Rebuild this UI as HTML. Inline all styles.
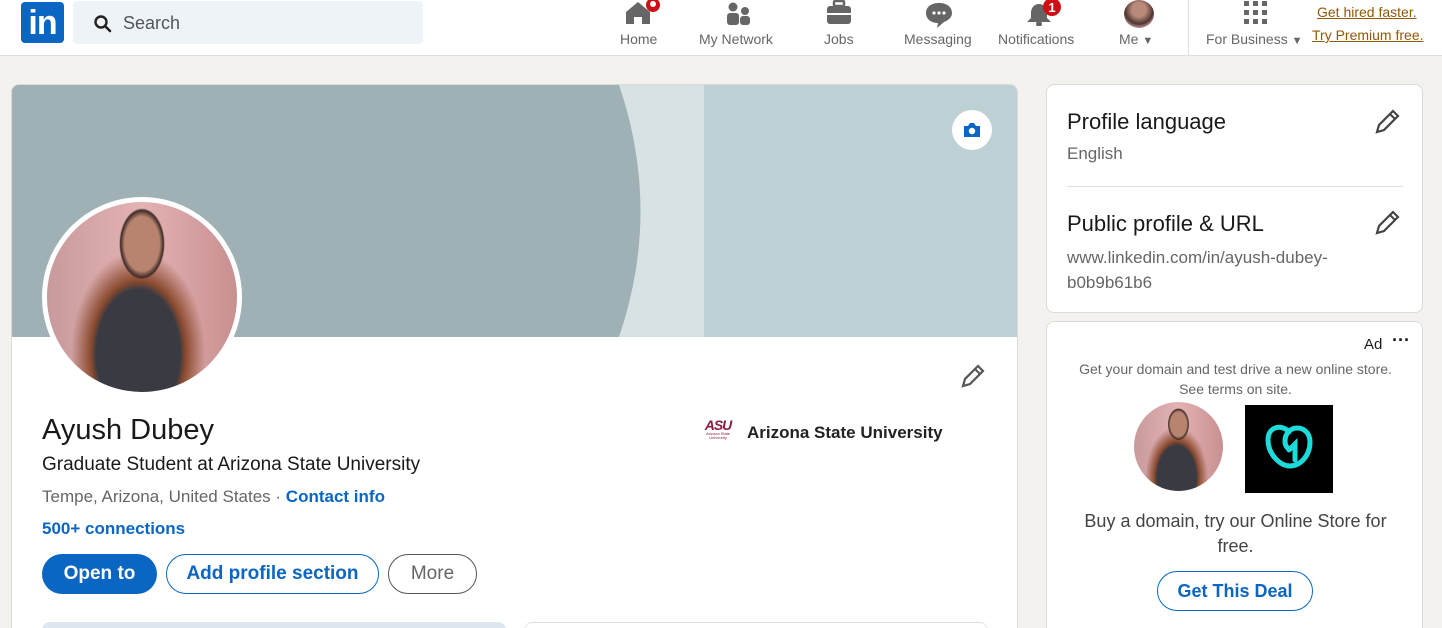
<!DOCTYPE html>
<html style="overflow:hidden"><head><meta charset="utf-8"><style>
*{box-sizing:border-box;margin:0;padding:0}
html,body{width:1442px;height:628px;overflow:hidden}
body{background:#f3f2ef;font-family:"Liberation Sans",sans-serif;position:relative;color:rgba(0,0,0,.9)}
.abs{position:absolute}
.hdr{position:absolute;left:0;top:0;width:1442px;height:56px;background:#fff;border-bottom:1px solid #e0dfdc}
.nav{position:absolute;top:31px;font-size:14px;color:#666;text-align:center}
.card{position:absolute;background:#fff;border-radius:8px;border:1px solid #dcdad6;overflow:hidden}
.btn{position:absolute;height:40px;border-radius:20px;font-size:19px;font-weight:bold;display:flex;align-items:center;justify-content:center}
</style></head><body>
<div class="hdr">
 <div class="abs" style="left:21px;top:2px;width:43px;height:41px;background:#0a66c2;border-radius:4px;color:#fff;font-weight:bold;font-size:34px;line-height:42px;text-align:center;letter-spacing:-1px">in</div>
 <div class="abs" style="left:73px;top:1px;width:350px;height:43px;background:#eef3f8;border-radius:4px"></div>
 <svg class="abs" style="left:93px;top:14px" width="20" height="20" viewBox="0 0 20 20"><circle cx="8" cy="8" r="5.5" fill="none" stroke="#222" stroke-width="2.4"/><path d="M12 12l5 5" stroke="#222" stroke-width="2.6" stroke-linecap="round"/></svg>
 <div class="abs" style="left:123px;top:13px;font-size:18px;color:#555">Search</div>
 <svg class="abs" style="left:624px;top:0" width="40" height="26"><path d="M2 12L14 2l12 10v12h-8v-7h-8v7H2z" fill="#666"/><circle cx="29" cy="5" r="7" fill="#cc1016"/><circle cx="29" cy="4" r="3" fill="#fff"/></svg>
 <div class="nav" style="left:620px">Home</div>
 <svg class="abs" style="left:726px;top:1px" width="26" height="24"><circle cx="7" cy="6" r="4.5" fill="#666"/><circle cx="19" cy="10" r="4" fill="#666"/><rect x="1" y="12" width="12" height="12" rx="3" fill="#666"/><rect x="14" y="15" width="10" height="9" rx="3" fill="#666"/></svg>
 <div class="nav" style="left:699px">My Network</div>
 <svg class="abs" style="left:826px;top:0" width="26" height="24"><rect x="8" y="1" width="10" height="5" rx="1" fill="none" stroke="#666" stroke-width="2.5"/><rect x="1" y="6" width="24" height="18" rx="3" fill="#666"/><rect x="1" y="13" width="24" height="2" fill="#fff"/></svg>
 <div class="nav" style="left:824px">Jobs</div>
 <svg class="abs" style="left:925px;top:2px" width="28" height="26"><path d="M14 1C6 1 1 5 1 11s5 10 12 10l-1 5 7-6c5-2 8-5 8-9C27 5 22 1 14 1z" fill="#666"/><circle cx="9" cy="11" r="1.6" fill="#fff"/><circle cx="14" cy="11" r="1.6" fill="#fff"/><circle cx="19" cy="11" r="1.6" fill="#fff"/></svg>
 <div class="nav" style="left:904px">Messaging</div>
 <svg class="abs" style="left:1024px;top:0" width="40" height="26"><path d="M15 4c-5 0-8 4-8 9v5l-4 4h24l-4-4v-5c0-5-3-9-8-9z" fill="#666"/><circle cx="15" cy="24" r="3" fill="#666"/><circle cx="28" cy="7" r="9" fill="#cc1016"/><text x="28" y="12" font-size="13" font-weight="bold" fill="#fff" text-anchor="middle" font-family="Liberation Sans">1</text></svg>
 <div class="nav" style="left:998px">Notifications</div>
 <div class="abs" style="left:1124px;top:0;width:30px;height:28px;border-radius:50%;background:radial-gradient(circle at 50% 35%,#b98a7a 0 30%,#4d3630 60%,#d2a5a5 80%)"></div>
 <div class="nav" style="left:1119px">Me <span style="font-size:11px">▼</span></div>
 <div class="abs" style="left:1188px;top:0;width:1px;height:56px;background:#e0dfdc"></div>
 <svg class="abs" style="left:1243px;top:0" width="26" height="26"><g fill="#666"><rect x="1" y="1" width="5" height="5"/><rect x="10" y="1" width="5" height="5"/><rect x="19" y="1" width="5" height="5"/><rect x="1" y="10" width="5" height="5"/><rect x="10" y="10" width="5" height="5"/><rect x="19" y="10" width="5" height="5"/><rect x="1" y="19" width="5" height="5"/><rect x="10" y="19" width="5" height="5"/><rect x="19" y="19" width="5" height="5"/></g></svg>
 <div class="nav" style="left:1206px">For Business <span style="font-size:11px">▼</span></div>
 <div class="abs" style="left:1317px;top:4px;font-size:14px;color:#915907;text-decoration:underline">Get hired faster.</div>
 <div class="abs" style="left:1312px;top:27px;font-size:14px;color:#915907;text-decoration:underline">Try Premium free.</div>
</div>

<div class="card" style="left:11px;top:84px;width:1007px;height:560px">
 <svg class="abs" style="left:0;top:0" width="1007" height="252"><rect width="1007" height="252" fill="#bdd1d5"/><rect width="692" height="252" fill="#d7e2e4"/><path d="M0 0H607Q650 126 607 252H0Z" fill="#9fb1b4"/></svg>
 <div class="abs" style="left:940px;top:25px;width:40px;height:40px;border-radius:50%;background:#fff"></div>
 <svg class="abs" style="left:950px;top:37px" width="20" height="16"><path d="M2 4h4l2-3h4l2 3h4v11H2z" fill="#0a66c2"/><circle cx="10" cy="9" r="3.2" fill="#fff"/></svg>
 <div class="abs" style="left:30px;top:112px;width:200px;height:200px;border-radius:50%;background:#fff;padding:5px"><div style="width:190px;height:190px;border-radius:50%;background:radial-gradient(ellipse at 50% 22%,#b88470 0 13%,#3e2b26 16%,transparent 17%),radial-gradient(ellipse at 48% 80%,#3a3a42 0 30%,#8a4a2e 34%,transparent 48%),linear-gradient(90deg,#c89a9c,#e4b2b4 50%,#c89090)"></div></div>
 <svg class="abs" style="left:948px;top:278px" width="26" height="26"><path d="M3 23l2-7L18 3l5 5L10 21z" fill="none" stroke="#555" stroke-width="2.2"/><path d="M15 6l5 5" stroke="#555" stroke-width="2"/></svg>
 <div class="abs" style="left:30px;top:329px;font-size:29px">Ayush Dubey</div>
 <div class="abs" style="left:30px;top:369px;font-size:19px">Graduate Student at Arizona State University</div>
 <div class="abs" style="left:30px;top:402px;font-size:17px;color:#666">Tempe, Arizona, United States · <b style="color:#0a66c2">Contact info</b></div>
 <div class="abs" style="left:30px;top:434px;font-size:17px;font-weight:bold;color:#0a66c2">500+ connections</div>
 <div class="abs" style="left:690px;top:333px;width:32px;text-align:center;line-height:1"><div style="font-size:14px;font-weight:bold;color:#8c1d40;font-style:italic;letter-spacing:-1px">ASU</div><div style="font-size:4px;color:#8c1d40">Arizona State University</div></div>
 <div class="abs" style="left:735px;top:338px;font-size:17px;font-weight:bold;color:#222">Arizona State University</div>
 <div class="btn" style="left:30px;top:469px;width:115px;background:#0a66c2;color:#fff">Open to</div>
 <div class="btn" style="left:154px;top:469px;width:213px;border:1px solid #0a66c2;color:#0a66c2">Add profile section</div>
 <div class="btn" style="left:376px;top:469px;width:89px;border:1px solid #555;color:#666;font-weight:normal">More</div>
 <div class="abs" style="left:30px;top:537px;width:464px;height:30px;background:#dde7f0;border-radius:8px"></div>
 <div class="abs" style="left:512px;top:537px;width:464px;height:30px;border:1px solid #e0e0e0;border-radius:8px"></div>
</div>

<div class="card" style="left:1046px;top:84px;width:377px;height:229px">
 <div class="abs" style="left:20px;top:24px;font-size:22px">Profile language</div>
 <div class="abs" style="left:20px;top:59px;font-size:17px;color:#666">English</div>
 <div class="abs" style="left:20px;top:101px;width:336px;height:1px;background:#e0dfdc"></div>
 <div class="abs" style="left:20px;top:126px;font-size:22px">Public profile &amp; URL</div>
 <div class="abs" style="left:20px;top:160px;font-size:17px;color:#666;line-height:25px">www.linkedin.com/in/ayush-dubey-<br>b0b9b61b6</div>
 <svg class="abs" style="left:327px;top:22px" width="28" height="28"><path d="M3 25l2-7L19 4l5 5L10 23z" fill="none" stroke="#444" stroke-width="2.2"/><path d="M16 7l5 5" stroke="#444" stroke-width="2"/></svg>
 <svg class="abs" style="left:327px;top:123px" width="28" height="28"><path d="M3 25l2-7L19 4l5 5L10 23z" fill="none" stroke="#444" stroke-width="2.2"/><path d="M16 7l5 5" stroke="#444" stroke-width="2"/></svg>
</div>

<div class="card" style="left:1046px;top:321px;width:377px;height:320px">
 <div class="abs" style="left:317px;top:14px;font-size:15px">Ad</div>
 <div class="abs" style="left:345px;top:8px;font-size:18px;font-weight:bold">···</div>
 <div class="abs" style="left:0;top:37px;width:377px;text-align:center;font-size:14px;color:#666;line-height:20px">Get your domain and test drive a new online store.<br>See terms on site.</div>
 <div class="abs" style="left:87px;top:80px;width:89px;height:89px;border-radius:50%;background:radial-gradient(ellipse at 50% 25%,#b88470 0 13%,#3e2b26 16%,transparent 17%),radial-gradient(ellipse at 48% 85%,#3a3a42 0 30%,#8a4a2e 34%,transparent 48%),linear-gradient(90deg,#c89a9c,#e4b2b4 50%,#c89090)"></div>
 <div class="abs" style="left:198px;top:83px;width:88px;height:88px;background:#000"></div>
 <svg class="abs" style="left:215px;top:98px" width="54" height="54" viewBox="0 0 54 54"><path d="M27 12C20 4 6 6 6 20c0 14 12 26 22 26s20-10 20-24c0-9-6-14-13-14-6 0-12 5-12 13 0 4 2 8 5 8" fill="none" stroke="#1bdbdb" stroke-width="5" stroke-linecap="round"/><path d="M27 30l6-6v16" fill="none" stroke="#1bdbdb" stroke-width="5" stroke-linecap="round"/></svg>
 <div class="abs" style="left:0;top:187px;width:377px;text-align:center;font-size:18px;color:#444;line-height:25px">Buy a domain, try our Online Store for<br>free.</div>
 <div class="btn" style="left:110px;top:249px;width:156px;border:1px solid #0a66c2;color:#0a66c2;font-size:18px">Get This Deal</div>
</div>
</body></html>
